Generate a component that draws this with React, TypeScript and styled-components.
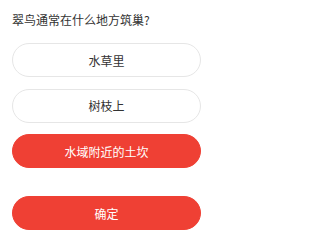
import styled, { createGlobalStyle } from "styled-components";

const GlobalStyle = createGlobalStyle`
  body {
    margin: 0;
    background: #ffffff;
    font-family: "Noto Sans CJK SC", "Noto Sans", sans-serif;
  }
`;

const StyledQuiz = styled.div`
  padding: 12px 12px 0;
  display: flex;
  flex-direction: column;

  .quiz-question {
    margin: 0 0 15px;
    font-size: 12px;
    line-height: 16px;
    font-weight: 400;
    color: #333333;
  }
`;

const OptionList = styled.div`
  display: flex;
  flex-direction: column;
  gap: 11.5px;
`;

const OptionButton = styled.button<{ $selected?: boolean }>`
  height: 34px;
  width: 189px;
  border-radius: 17px;
  border: 1px solid ${(p) => (p.$selected ? "#ef4034" : "#e6e6e6")};
  background-color: ${(p) => (p.$selected ? "#ef4034" : "#ffffff")};
  color: ${(p) => (p.$selected ? "#ffffff" : "#333333")};
  font-family: inherit;
  font-size: 12px;
  padding: 0;
  cursor: pointer;
`;

const ConfirmButton = styled(OptionButton)`
  margin-top: 28px;
  border-color: #ef4034;
  background-color: #ef4034;
  color: #ffffff;
`;

const options = ["水草里", "树枝上", "水域附近的土坎"];

const App = () => {
  const selected = 2;

  return (
    <>
      <GlobalStyle />
      <StyledQuiz>
        <h2 className="quiz-question">翠鸟通常在什么地方筑巢?</h2>
        <OptionList>
          {options.map((item, index) => (
            <OptionButton key={item} $selected={index === selected}>
              {item}
            </OptionButton>
          ))}
        </OptionList>
        <ConfirmButton>确定</ConfirmButton>
      </StyledQuiz>
    </>
  );
};

export default App;
